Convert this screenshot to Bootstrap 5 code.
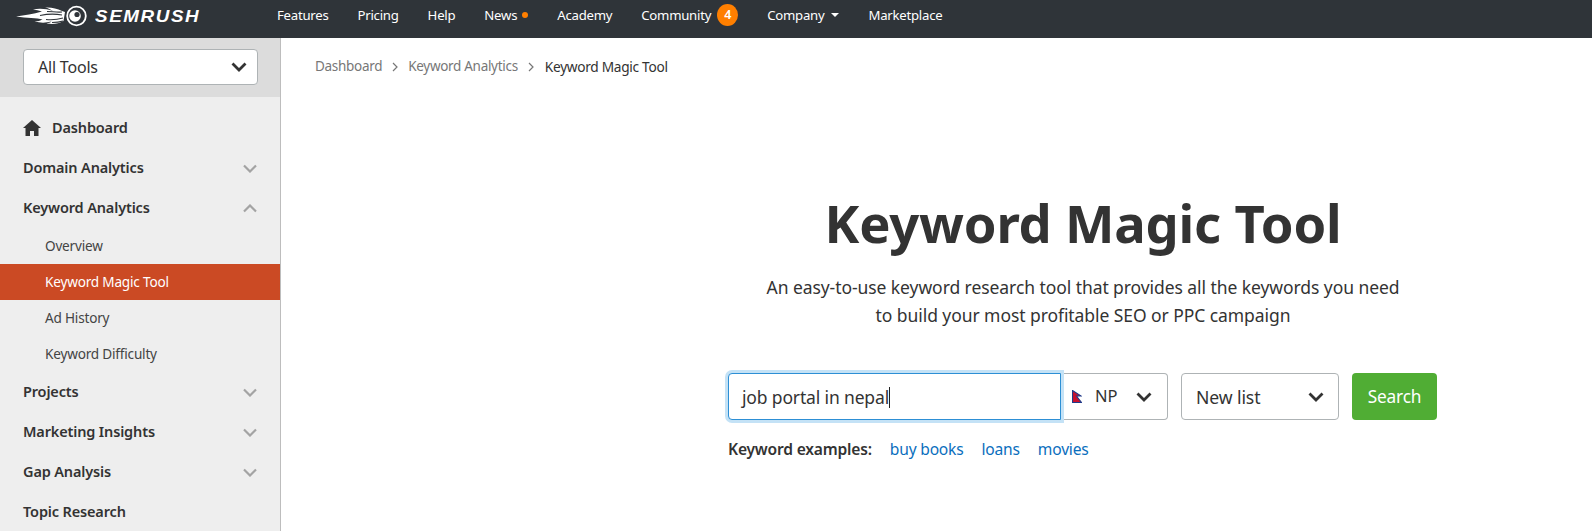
<!DOCTYPE html>
<html lang="en"><head><meta charset="utf-8"><title>Keyword Magic Tool</title>
<link href="https://cdn.jsdelivr.net/npm/bootstrap@5.3.0/dist/css/bootstrap.min.css" rel="stylesheet">
<style>
html,body{height:531px;overflow:hidden}
body{font-family:"Noto Sans","Open Sans",sans-serif;color:#333;background:#fff;font-size:14px}
.topbar{height:38px;background:#2f3439;padding:0 0 6px}
.brand-wrap{width:277px;padding-left:16px;gap:6px}
.wordmark{font:italic 700 16.5px "Liberation Sans",sans-serif;letter-spacing:1.4px;color:#fff;transform:scaleX(1.14);transform-origin:left center}
.topnav{gap:29px;font-size:13.2px;letter-spacing:-.25px;margin-bottom:2px}
.topnav a{color:#fff;text-decoration:none;line-height:22px}
.dot{width:6px;height:6px;background:#ff7f00;border-radius:50%;margin-left:5px}
.count{width:21px;height:22px;background:#ff7f00;border-radius:50%;color:#fff;font-size:12.5px;font-weight:600;margin-left:6px}
.caret-d{width:0;height:0;border-left:4px solid transparent;border-right:4px solid transparent;border-top:4px solid #fff;margin-left:7px}
.shell{height:493px}
.side{width:281px;background:#eee;border-right:1px solid #bdbdbd;flex:none}
.side-top{height:59px;background:#dcdcdc;padding:11px 23px 0}
.pick{height:36px;width:235px;background:#fff;border:1px solid #aeb3b5;border-radius:4px;font-size:16px;padding:0 10px 0 14px;letter-spacing:-.2px}
.menu-row{height:40px;padding:0 23px;font-weight:600;font-size:14.5px;color:#333;letter-spacing:-.15px}
.menu-first{margin-top:11px}
.home-ico{margin-right:11px}
.sub-row{height:36px;padding:0 0 0 45px;font-size:13.6px;color:#444;letter-spacing:-.2px}
.sub-row.on{background:#cb4a24;color:#fff}
.main-area{min-width:0}
.crumbs{padding:19px 0 0 34px;font-size:13.5px;color:#777;gap:10px;line-height:19px;letter-spacing:-.3px}
.crumbs b{font-weight:400;color:#333;font-size:13.7px;margin-left:1px}
.hero{width:710px;margin:114px 0 0 447px}
.hero h1{font-size:52.5px;font-weight:700;color:#333;line-height:66px;margin:0 0 18px;text-align:center;letter-spacing:-.2px}
.hero p{font-size:17.5px;line-height:27.5px;color:#333;text-align:center;margin:0 0 44px;letter-spacing:-.07px}
.field{height:47px;flex:none;border:1px solid #aeb3b5;background:#fff;font-size:16.5px}
.f-kw{width:333px;border:1px solid #2d8fd5;border-radius:4px 0 0 4px;box-shadow:0 0 0 3px #c4e2f6;padding:1px 13px 0;position:relative;z-index:1;font-size:17.5px;letter-spacing:-.15px}
.cursor{width:1px;height:21px;background:#222}
.f-geo{width:107px;border-left:0;border-radius:0 4px 4px 0;padding:0 15px 0 11px}
.geo-label{gap:13px}
.f-list{width:158px;margin-left:13px;border-radius:4px;padding:1px 14px 0;font-size:17.6px;letter-spacing:-.1px}
.go{flex:none;width:85px;height:47px;margin-left:13px;background:#50ad34;color:#fff;border:0;border-radius:4px;font-size:17.3px;letter-spacing:-.2px;padding:0 0 0 0}
.go:hover{background:#50ad34;color:#fff}
.examples{margin-top:18px;font-size:15.6px;gap:18px;line-height:22px;letter-spacing:-.2px}
.examples strong{font-weight:600;color:#333}
.examples a{color:#0a6ebd;text-decoration:none}
</style></head>
<body>
<nav class="topbar d-flex align-items-center">
 <div class="brand-wrap d-flex align-items-center">
  <svg width="73" height="22" viewBox="0 0 73 22" aria-hidden="true">
   <path fill="#fff" d="M0 11.500C9 10 17 9 26 6.500 23 5.500 20 5 17 4.500c7-1.500 14-.5 20 1.500-2-1.500-5-3-8-3.500 6-.5 12 1 17 3.500l3 1-1.500 9c-5 3-11 3.500-17 2.500 2-.5 4-1 5-2-6 1.500-11 1.500-17 0 3 0 6-1 8-2C21 13 11 13 0 11.500z"/>
   <path d="M24 10.500c7-1.500 14-2 22-.5M31 6.500c5 0 10 1 15 .5M30 14.500c6 .5 12 0 17-1.500M36 17.500c4 0 8-.5 11-1.500" fill="none" stroke="#2f3439" stroke-width="1.100"/>
   <circle cx="60.500" cy="11" r="10" fill="#2f3439"/>
   <circle cx="60.500" cy="11" r="9.300" fill="none" stroke="#fff" stroke-width="1.800"/>
   <circle cx="59" cy="11" r="5.800" fill="#fff"/>
   <circle cx="61" cy="9.500" r="2.600" fill="#2f3439"/>
  </svg>
  <span class="wordmark">SEMRUSH</span>
 </div>
 <div class="topnav d-flex align-items-center">
  <a href="#">Features</a><a href="#">Pricing</a><a href="#">Help</a>
  <a href="#" class="d-flex align-items-center">News<span class="dot"></span></a>
  <a href="#">Academy</a>
  <a href="#" class="d-flex align-items-center">Community<span class="count d-flex align-items-center justify-content-center">4</span></a>
  <a href="#" class="d-flex align-items-center">Company<span class="caret-d"></span></a>
  <a href="#">Marketplace</a>
 </div>
</nav>
<div class="shell d-flex">
 <aside class="side">
  <div class="side-top"><div class="pick d-flex align-items-center justify-content-between"><span>All Tools</span>
   <svg width="16" height="10" viewBox="0 0 16 10"><path d="M1.500 1.500 8 8l6.500-6.500" fill="none" stroke="#333" stroke-width="2.800"/></svg></div></div>
  <div class="menu-row menu-first d-flex align-items-center">
   <svg width="18" height="16" viewBox="0 0 18 16" class="home-ico"><path fill="#333" d="M9 0 0 8h2.500v8H7v-5h4v5h4.500V8H18z"/></svg><span>Dashboard</span></div>
  <div class="menu-row d-flex align-items-center justify-content-between"><span>Domain Analytics</span><svg width="14" height="9" viewBox="0 0 14 9"><path d="M1 1.500l6 6 6-6" fill="none" stroke="#a3a3a3" stroke-width="2.200"/></svg></div>
  <div class="menu-row d-flex align-items-center justify-content-between"><span>Keyword Analytics</span><svg width="14" height="9" viewBox="0 0 14 9"><path d="M1 7.500l6-6 6 6" fill="none" stroke="#a3a3a3" stroke-width="2.200"/></svg></div>
  <div class="sub-row d-flex align-items-center">Overview</div>
  <div class="sub-row on d-flex align-items-center">Keyword Magic Tool</div>
  <div class="sub-row d-flex align-items-center">Ad History</div>
  <div class="sub-row d-flex align-items-center">Keyword Difficulty</div>
  <div class="menu-row d-flex align-items-center justify-content-between"><span>Projects</span><svg width="14" height="9" viewBox="0 0 14 9"><path d="M1 1.500l6 6 6-6" fill="none" stroke="#a3a3a3" stroke-width="2.200"/></svg></div>
  <div class="menu-row d-flex align-items-center justify-content-between"><span>Marketing Insights</span><svg width="14" height="9" viewBox="0 0 14 9"><path d="M1 1.500l6 6 6-6" fill="none" stroke="#a3a3a3" stroke-width="2.200"/></svg></div>
  <div class="menu-row d-flex align-items-center justify-content-between"><span>Gap Analysis</span><svg width="14" height="9" viewBox="0 0 14 9"><path d="M1 1.500l6 6 6-6" fill="none" stroke="#a3a3a3" stroke-width="2.200"/></svg></div>
  <div class="menu-row d-flex align-items-center"><span>Topic Research</span></div>
 </aside>
 <main class="main-area flex-grow-1">
  <div class="crumbs d-flex align-items-center">
   <span>Dashboard</span><svg width="6" height="10" viewBox="0 0 6 10"><path d="M1 1l4 4-4 4" fill="none" stroke="#777" stroke-width="1.200"/></svg>
   <span>Keyword Analytics</span><svg width="6" height="10" viewBox="0 0 6 10"><path d="M1 1l4 4-4 4" fill="none" stroke="#777" stroke-width="1.200"/></svg>
   <b>Keyword Magic Tool</b>
  </div>
  <section class="hero">
   <h1>Keyword Magic Tool</h1>
   <p>An easy-to-use keyword research tool that provides all the keywords you need<br>to build your most profitable SEO or PPC campaign</p>
   <div class="d-flex">
    <div class="field f-kw d-flex align-items-center"><span>job portal in nepal</span><span class="cursor"></span></div>
    <div class="field f-geo d-flex align-items-center justify-content-between">
     <span class="geo-label d-flex align-items-center"><svg width="10" height="13" viewBox="0 0 10 13"><path d="M.5.500 9 6H4.500L9.500 12.500H.5z" fill="#c8102e" stroke="#1f3a8a" stroke-width="1.100"/></svg><span>NP</span></span>
     <svg width="16" height="10" viewBox="0 0 16 10"><path d="M1.500 1.500 8 8l6.500-6.500" fill="none" stroke="#333" stroke-width="2.800"/></svg></div>
    <div class="field f-list d-flex align-items-center justify-content-between"><span>New list</span>
     <svg width="16" height="10" viewBox="0 0 16 10"><path d="M1.500 1.500 8 8l6.500-6.500" fill="none" stroke="#333" stroke-width="2.800"/></svg></div>
    <button type="button" class="btn go">Search</button>
   </div>
   <div class="examples d-flex"><strong>Keyword examples:</strong><a href="#">buy books</a><a href="#">loans</a><a href="#">movies</a></div>
  </section>
 </main>
</div>
</body></html>
